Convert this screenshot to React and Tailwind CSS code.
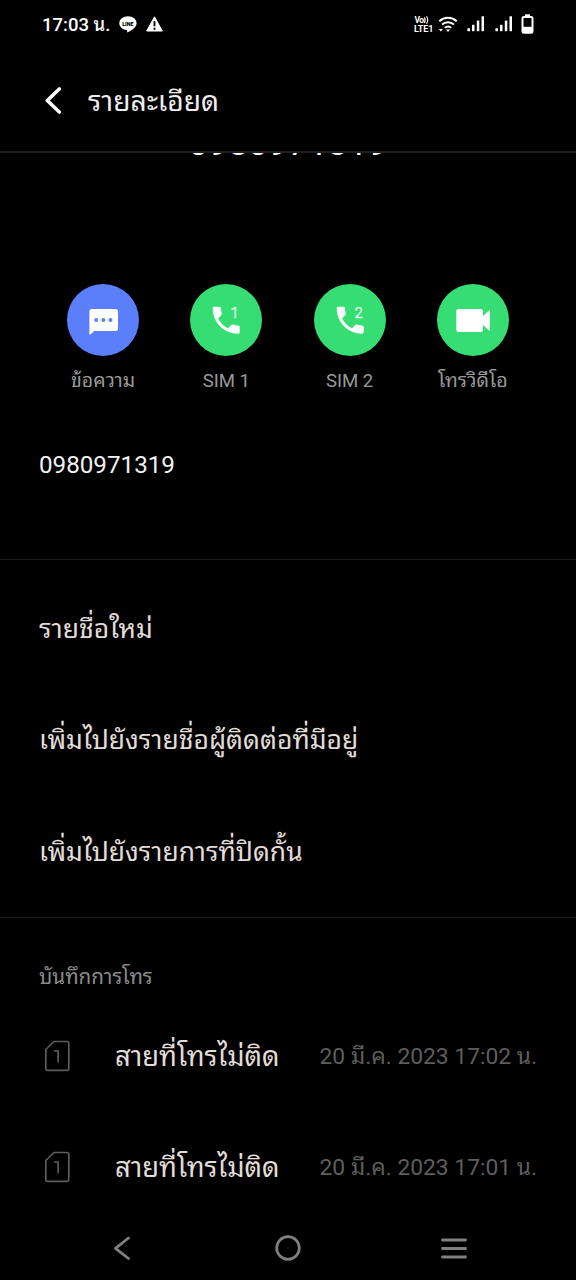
import React from 'react';

const contactOptions = ['รายชื่อใหม่', 'เพิ่มไปยังรายชื่อผู้ติดต่อที่มีอยู่', 'เพิ่มไปยังรายการที่ปิดกั้น'];

const callLogs = [
  { id: 1, status: 'สายที่โทรไม่ติด', time: '20 มี.ค. 2023 17:02 น.' },
  { id: 2, status: 'สายที่โทรไม่ติด', time: '20 มี.ค. 2023 17:01 น.' },
];

const SignalIcon = () => (
  <svg width="18" height="16" viewBox="0 0 18 16" fill="#fff">
    <rect x="0.4" y="12.3" width="2.6" height="2.9" />
    <rect x="5" y="8.8" width="2.5" height="6.4" />
    <rect x="9.8" y="4.6" width="2.5" height="10.6" />
    <rect x="14.5" y="0.3" width="2.5" height="14.9" />
  </svg>
);

const StatusBar = () => (
  <div className="flex h-12 shrink-0 items-center pl-[42px] pr-[42px] text-white">
    <span className="w-[67px] whitespace-nowrap pt-px text-[18.5px] font-medium leading-6">17:03 น.</span>
    <svg className="ml-[10px]" width="18" height="17" viewBox="0 0 18 17">
      <path d="M9 .2C4.2.2.3 3.3.3 7.2c0 3.5 3.2 6.3 7.3 6.9.7.1.7.5.5 2.5 2.7-1.3 9.5-4.7 9.5-9.4C17.6 3.3 13.8.2 9 .2z" fill="#fff" />
      <text x="8.9" y="9.5" fontSize="5.6" fontWeight="900" textAnchor="middle" fill="#000" textLength="11.5" lengthAdjust="spacingAndGlyphs">LINE</text>
    </svg>
    <svg className="ml-[9px]" width="17" height="16" viewBox="0 0 17 16">
      <path d="M8.5.8 16.3 15H.7z" fill="#fff" stroke="#fff" strokeLinejoin="round" />
      <path d="M8.5 5.2v5M8.5 11.7v2" stroke="#000" strokeWidth="1.9" />
    </svg>

    <div className="ml-auto flex items-center">
      <svg width="20" height="18" viewBox="0 0 20 18" fill="#fff">
        <text x="0.5" y="8" fontSize="8.5" fontWeight="700" textLength="9.5">Vo</text>
        <path d="M10.3 2.4q1.8 2.8 0 5.6M12.5 1.2q2.5 3.7 0 7.6" fill="none" stroke="#fff" strokeWidth="1.1" />
        <text x="0" y="16.7" fontSize="9" fontWeight="700" textLength="19.5">LTE1</text>
      </svg>
      <svg className="ml-1" width="20" height="17" viewBox="0 0 20 17" fill="none" stroke="#fff" strokeWidth="2">
        <path d="M1.3 5.2a13 13 0 0 1 17.4 0M4 8.6a9 9 0 0 1 12 0M6.8 11.8a5 5 0 0 1 6.4 0" />
        <path d="M7.9 13.5h4.2L10 16zM.8 13h4l-2 2.5z" fill="#fff" stroke="none" />
      </svg>
      <div className="ml-[9px] flex gap-[10px]">
        <SignalIcon />
        <SignalIcon />
      </div>
      <svg className="ml-2" width="13" height="20" viewBox="0 0 13 20">
        <path d="M4 .3h5v2.5H4z" fill="#fff" />
        <rect x="1.5" y="3" width="10" height="15.8" rx="1.3" fill="none" stroke="#fff" strokeWidth="2" />
        <path d="M2 12.8h9V18H2z" fill="#fff" />
      </svg>
    </div>
  </div>
);

const PhoneIcon = ({ sim }) => (
  <svg width="72" height="72" viewBox="0 0 72 72" fill="#fff">
    <path
      transform="translate(18.2 18.2) scale(1.5)"
      d="M6.62 10.79c1.44 2.83 3.76 5.14 6.59 6.59l2.2-2.2c.27-.27.67-.36 1.02-.24 1.12.37 2.33.57 3.57.57.55 0 1 .45 1 1V20c0 .55-.45 1-1 1-9.39 0-17-7.61-17-17 0-.55.45-1 1-1h3.5c.55 0 1 .45 1 1 0 1.25.2 2.45.57 3.57.11.35.03.74-.25 1.02l-2.2 2.2z"
    />
    <text x="44.8" y="33.5" fontSize="15" textAnchor="middle" fill="#d8fbe4" stroke="#d8fbe4" strokeWidth="0.3">{sim}</text>
  </svg>
);

const MessageIcon = () => (
  <svg width="72" height="72" viewBox="0 0 72 72">
    <path d="M24.5 25h24q2.5 0 2.5 2.5v17q0 2.5-2.5 2.5H27.3l-3.9 3.5q-1 .8-1-.5V27.5q0-2.5 2.1-2.5z" fill="#fff" />
    <g fill="#5b7ffb">
      <circle cx="29.2" cy="36" r="2" />
      <circle cx="36.3" cy="36" r="2" />
      <circle cx="43.5" cy="36" r="2" />
    </g>
  </svg>
);

const VideoIcon = () => (
  <svg width="72" height="72" viewBox="0 0 72 72" fill="#fff">
    <rect x="19.3" y="25" width="26.7" height="23" rx="2.3" />
    <path d="M45 33l7-6.5q.9-.7.9.4v19.2q0 1.100-.9.4L45 40z" />
  </svg>
);

const SimCardIcon = () => (
  <svg width="26" height="32" viewBox="0 0 26 32" fill="none" stroke="#5c5c5c" strokeWidth="1.7">
    <path d="M10 1.5h13q1.8 0 1.8 1.8v25.2q0 1.8-1.8 1.8H3.6q-1.8 0-1.8-1.8V9.5z" />
    <path d="M9.8 11h4.300v11.5" />
  </svg>
);

const Action = ({ label, color, textSize, children }) => (
  <div className="flex flex-col items-center">
    <div className={`h-[72px] w-[72px] rounded-full ${color}`}>{children}</div>
    <span className={`mt-[13px] whitespace-nowrap leading-6 text-[#999] ${textSize}`}>{label}</span>
  </div>
);

const App = () => {
  return (
    <div className="flex h-[1280px] w-[576px] flex-col overflow-hidden bg-black font-[Roboto,'Noto_Sans_Thai_Looped',Loma,sans-serif]">
      <StatusBar />

      {/* Title bar */}
      <header className="flex h-[105px] shrink-0 items-center border-b-2 border-[#202020] pl-[44px]">
        <svg width="20" height="28" viewBox="0 0 20 28" fill="none" stroke="#fff" strokeWidth="3.6" strokeLinecap="round" strokeLinejoin="round">
          <path d="M15.3 3 3.3 14.5l12 11.5" />
        </svg>
        <h1 className="ml-[24px] pt-[4px] text-[28.2px] leading-8 text-[#eee]">รายละเอียด</h1>
      </header>

      {/* Large number scrolled under the title bar */}
      <div className="h-[131px] shrink-0 overflow-hidden">
        <div className="-mt-[30px] text-center text-[35.5px] leading-10 text-white">0980971319</div>
      </div>

      <div className="mx-auto grid w-[493px] shrink-0 grid-cols-4">
        <Action label="ข้อความ" color="bg-[#5b7ffb]" textSize="text-[19.5px]"><MessageIcon /></Action>
        <Action label="SIM 1" color="bg-[#36dd72]" textSize="text-[18.6px]"><PhoneIcon sim="1" /></Action>
        <Action label="SIM 2" color="bg-[#36dd72]" textSize="text-[18.6px]"><PhoneIcon sim="2" /></Action>
        <Action label="โทรวิดีโอ" color="bg-[#36dd72]" textSize="text-[19.6px]"><VideoIcon /></Action>
      </div>

      <div className="mt-[56px] h-[111px] shrink-0 border-b border-[#1c1c1c] pl-[39px] text-[24.2px] leading-8 text-[#f2f2f2]">
        0980971319
      </div>

      {/* Contact options */}
      <div className="h-[358px] shrink-0 border-b border-[#1c1c1c] pt-[13px]">
        {contactOptions.map((option) => (
          <div key={option} className="flex h-[111.5px] items-center pl-[39px] text-[26.5px] leading-8 text-[#e2dcd8]">
            <span className="whitespace-nowrap">{option}</span>
          </div>
        ))}
      </div>

      {/* Call log */}
      <div className="shrink-0 pt-[47px]">
        <h2 className="pl-[39px] text-[20.6px] leading-6 text-[#8a8a8a]">บันทึกการโทร</h2>
        <div className="mt-[11px]">
          {callLogs.map((log) => (
            <div key={log.id} className="flex h-[111px] items-center pl-[44px] pr-[39px]">
              <SimCardIcon />
              <span className="ml-[45px] whitespace-nowrap pt-[3px] text-[27.4px] leading-8 text-[#e2dcd8]">{log.status}</span>
              <span className="ml-auto whitespace-nowrap pt-[2px] text-[22.8px] leading-8 text-[#5e5e5e]">{log.time}</span>
            </div>
          ))}
        </div>
      </div>

      {/* System navigation */}
      <nav className="-mt-[6px] flex h-16 shrink-0 items-center justify-between pl-[113px] pr-[108px]">
        <svg width="18" height="26" viewBox="0 0 18 26" fill="none" stroke="#808080" strokeWidth="2.8" strokeLinecap="round" strokeLinejoin="round">
          <path d="M15.5 3 2.5 13.3l13 10.2" />
        </svg>
        <svg className="ml-[5px]" width="26" height="26" viewBox="0 0 26 26">
          <circle cx="13" cy="13" r="11.3" fill="none" stroke="#808080" strokeWidth="2.7" />
        </svg>
        <svg width="28" height="26" viewBox="0 0 28 26" stroke="#808080" strokeWidth="2.8" strokeLinecap="round">
          <path d="M2.5 5h23M2.5 13.5h23M2.5 22h23" />
        </svg>
      </nav>
    </div>
  );
};

export default App;
